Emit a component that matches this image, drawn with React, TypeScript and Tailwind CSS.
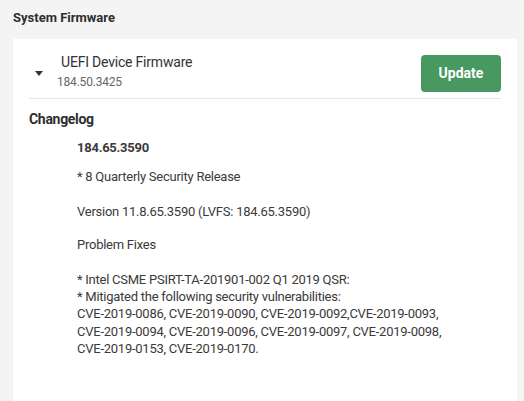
import { useState } from "react";

const CVE_LINES = [
  "* Intel CSME PSIRT-TA-201901-002 Q1 2019 QSR:",
  "* Mitigated the following security vulnerabilities:",
  "CVE-2019-0086, CVE-2019-0090, CVE-2019-0092,CVE-2019-0093,",
  "CVE-2019-0094, CVE-2019-0096, CVE-2019-0097, CVE-2019-0098,",
  "CVE-2019-0153, CVE-2019-0170.",
];

export default function App() {
  const [open, setOpen] = useState(true);

  return (
    <div
      className="w-[524px] h-[401px] overflow-hidden bg-[#f4f4f4] text-[#333] px-[13px]"
      style={{ fontFamily: "Roboto, 'Open Sans', sans-serif" }}
    >
      {/* Header */}
      <h1 className="h-[39px] pt-[9px] text-[13px] font-bold leading-[18px] text-[#2e2e2e]">
        System Firmware
      </h1>

      {/* Card */}
      <div className="w-[504px] h-[400px] bg-white px-4">
        <div className="flex items-center h-[60px] pt-[16px] pb-[7px] border-b border-[#e6e6e6]">
          <button
            onClick={() => setOpen((o) => !o)}
            className="w-[28px] h-[20px] flex items-center justify-start pl-[6px]"
          >
            <svg width="8" height="5" viewBox="0 0 8 5">
              <path
                d={open ? "M0 0 L8 0 L4 5 Z" : "M0 0 L5 2.5 L0 5 Z"}
                fill="#333"
              />
            </svg>
          </button>
          <div className="flex-1 flex flex-col tracking-[-0.2px] -mt-[2px]">
            <span className="text-[14px] leading-[20px] text-[#333] pl-[4px]">
              UEFI Device Firmware
            </span>
            <span className="text-[12px] leading-[20px] text-[#666]">
              184.50.3425
            </span>
          </div>
          <button className="w-[80px] h-[37px] rounded-[4px] bg-[#48995f] text-white text-[14px] font-bold">
            Update
          </button>
        </div>

        {open && (
          <div>
            <h2 className="text-[14px] font-bold leading-[20px] mt-[10px] text-[#2e2e2e] tracking-[-0.3px]">
              Changelog
            </h2>
            <div className="pl-[48px] text-[13px] leading-[17.3px] text-[#3a3a3a] tracking-[-0.25px]">
              <p className="font-bold mt-[10px]">184.65.3590</p>
              <p className="mt-[12px]">* 8 Quarterly Security Release</p>
              <p className="mt-[17px]">Version 11.8.65.3590 (LVFS: 184.65.3590)</p>
              <p className="mt-[16.5px]">Problem Fixes</p>
              <p className="mt-[17px]">
                {CVE_LINES.map((l) => (
                  <span key={l} className="block">
                    {l}
                  </span>
                ))}
              </p>
            </div>
          </div>
        )}
      </div>
    </div>
  );
}
